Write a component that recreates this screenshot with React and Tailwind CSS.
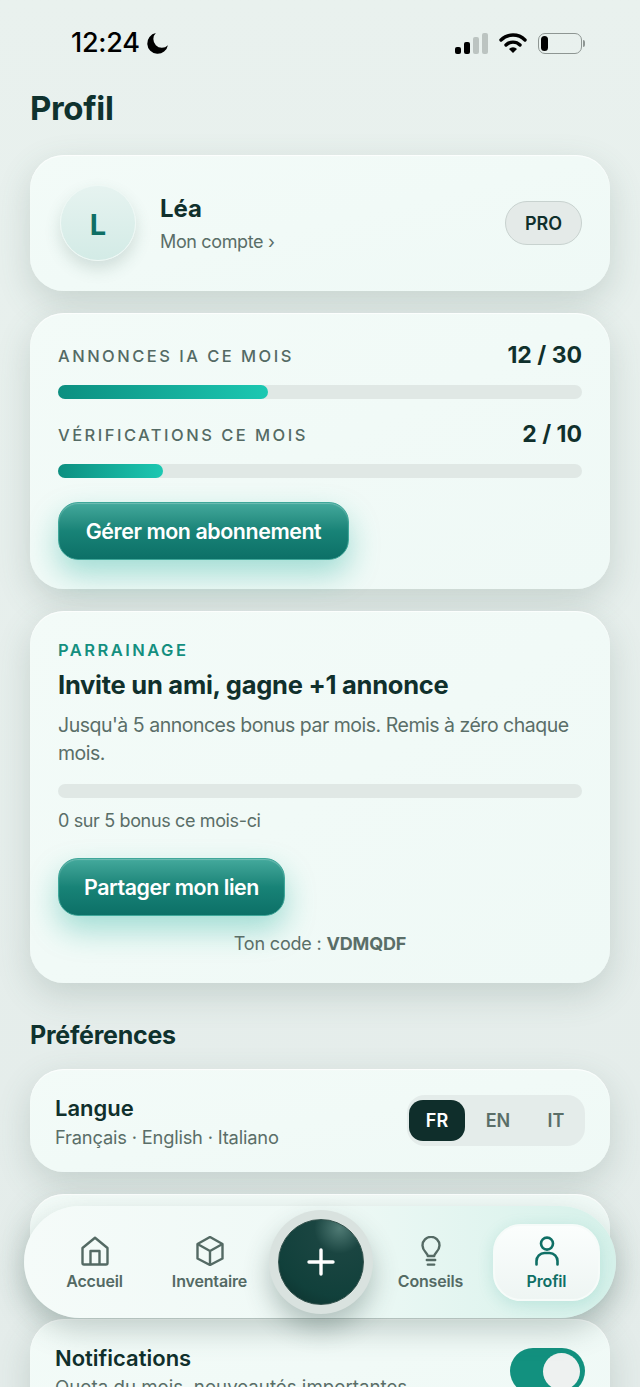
const cardClass =
    'rounded-[34px] bg-gradient-to-br from-[#f3fbf8] to-[#eff9f6] shadow-[0_12px_34px_rgba(70,100,92,0.2),inset_0_1px_1px_rgba(255,255,255,0.8)]';

const buttonClass =
    'h-[58px] rounded-[20px] border border-[#3fa79a] bg-gradient-to-b from-[#43a99c] via-[#188377] to-[#0c7067] text-[21.4px] font-semibold tracking-[-0.02em] text-white shadow-[0_14px_30px_rgba(20,170,150,0.36),inset_0_1px_1px_rgba(255,255,255,0.25)]';

function StatusBar() {
    return (
        <div className="flex h-[86px] items-center justify-between pl-[71px] pr-[55px] text-black">
            <div className="flex items-center gap-[5px]">
                <span className="text-[27px] font-medium tracking-[-0.01em]">12:24</span>
                <svg width="25" height="25" viewBox="0 0 24 24" fill="currentColor">
                    <path d="M22 13.6A10 10 0 1 1 10.4 2a8 8 0 0 0 11.6 11.6z" />
                </svg>
            </div>
            <div className="flex items-center gap-[11px]">
                <div className="flex items-end gap-[3px]">
                    <span className="h-[7px] w-[6px] rounded-[2px] bg-black" />
                    <span className="h-[12px] w-[6px] rounded-[2px] bg-black" />
                    <span className="h-[17px] w-[6px] rounded-[2px] bg-[#bcc4c1]" />
                    <span className="h-[21px] w-[6px] rounded-[2px] bg-[#bcc4c1]" />
                </div>
                <svg width="28" height="22" viewBox="0 0 28 22" fill="none" stroke="black" strokeWidth="3.4" strokeLinecap="round">
                    <path d="M2 8a17 17 0 0 1 24 0" />
                    <path d="M7 13a10 10 0 0 1 14 0" />
                    <path d="M14 21l-4-4a5.5 5.5 0 0 1 8 0z" fill="black" stroke="none" />
                </svg>
                <div className="flex items-center gap-[1px]">
                    <div className="flex h-[21px] w-[44px] items-center rounded-[7px] border-[1.5px] border-[#8e9693] px-[2px]">
                        <span className="h-[15px] w-[7px] rounded-[4px] bg-black" />
                    </div>
                    <span className="h-[7px] w-[2px] rounded-r-sm bg-[#8e9693]" />
                </div>
            </div>
        </div>
    );
}

function Usage({ label, value, percent }) {
    return (
        <div>
            <div className="flex h-[28px] items-center justify-between">
                <span className="pt-[3px] text-[16.5px] font-medium tracking-[0.15em] text-[#546a64]">{label}</span>
                <span className="text-[23px] font-bold text-[#10302c]">{value}</span>
            </div>
            <div className="mt-[16px] h-[14px] rounded-full bg-[#e0e8e5]">
                <div
                    className="h-full rounded-full bg-gradient-to-r from-[#0c8f80] to-[#1cc8b2]"
                    style={{ width: `${percent}%` }}
                />
            </div>
        </div>
    );
}

function HomeIcon() {
    return (
        <svg width="30" height="30" viewBox="0 0 30 30" fill="none" stroke="currentColor" strokeWidth="2.4" strokeLinejoin="round">
            <path d="M2.5 12 15 1.8 27.5 12v15a1.5 1.5 0 0 1-1.5 1.5H4A1.5 1.5 0 0 1 2.5 27z" />
            <path d="M10.5 28.5V15h9v13.5" />
        </svg>
    );
}

function BoxIcon() {
    return (
        <svg width="30" height="30" viewBox="0 0 30 30" fill="none" stroke="currentColor" strokeWidth="2.4" strokeLinejoin="round">
            <path d="M15 1 27.5 8v14.5L15 29 2.5 22.5V8z" />
            <path d="M2.5 8 15 15l12.5-7M15 15v14" />
        </svg>
    );
}

function BulbIcon() {
    return (
        <svg width="30" height="30" viewBox="0 0 30 30" fill="none" stroke="currentColor" strokeWidth="2.4" strokeLinecap="round" strokeLinejoin="round">
            <path d="M11.8 20c0-3-5.3-4.8-5.3-10.6a8.5 8.5 0 0 1 17 0C23.500 15.200 18.200 17 18.200 20z" />
            <path d="M10.800 24h8.400M11.800 28.600h6.400" />
        </svg>
    );
}

function PersonIcon() {
    return (
        <svg width="30" height="30" viewBox="0 0 30 30" fill="none" stroke="currentColor" strokeWidth="2.6" strokeLinecap="round">
            <circle cx="15" cy="7.600" r="6" />
            <path d="M4.500 28.500v-3.500a8 8 0 0 1 8-8h5a8 8 0 0 1 8 8v3.500" />
        </svg>
    );
}

function NavItem({ icon: Icon, label, active }) {
    return (
        <div
            className={
                active
                    ? 'flex h-[77px] w-[107px] flex-col items-center justify-center gap-[5px] rounded-[28px] border-2 border-[#f6fbf9] bg-gradient-to-b from-[#fbfefd] to-[#eef5f3] pt-[2px] text-[#0f6f65] shadow-[0_4px_16px_rgba(40,160,145,0.18)]'
                    : 'flex h-[77px] w-[107px] flex-col items-center justify-center gap-[5px] pt-[2px] text-[#546a64]'
            }
        >
            <Icon />
            <span className="text-[16px] font-semibold leading-[20px] tracking-[-0.01em]">{label}</span>
        </div>
    );
}

function BottomNav() {
    return (
        <div className="absolute left-[24px] top-[1206px] grid h-[112px] w-[592px] grid-cols-[115px_113px_108px_116px_107px] items-center rounded-[56px] bg-gradient-to-r from-[#f5fbf9] via-[#eff9f6] to-[#d6f1ea] pl-[17px] shadow-[0_12px_30px_rgba(60,90,82,0.28)]">
            <NavItem icon={HomeIcon} label="Accueil" />
            <NavItem icon={BoxIcon} label="Inventaire" />
            <div className="flex h-[104px] w-[104px] items-center justify-center rounded-full bg-[#d9e2df] shadow-[0_14px_26px_rgba(40,70,64,0.3)]">
                <div className="flex h-[86px] w-[86px] items-center justify-center rounded-full border border-[#34524d] bg-[radial-gradient(circle_at_72%_10%,#4f7a74_0%,#1a4541_26%,#11403b_70%,#0c2f2b_100%)] text-white">
                    <svg width="30" height="30" viewBox="0 0 30 30" stroke="currentColor" strokeWidth="3.4" strokeLinecap="round">
                        <path d="M15 3v24M3 15h24" />
                    </svg>
                </div>
            </div>
            <NavItem icon={BulbIcon} label="Conseils" />
            <NavItem icon={PersonIcon} label="Profil" active />
        </div>
    );
}

export default function App() {
    return (
        <div className="relative h-[1387px] overflow-hidden bg-gradient-to-b from-[#e9f1ee] to-[#e4ecea] font-['Inter',sans-serif] text-[#10302c]">
            <StatusBar />

            <main className="px-[30px]">
                <h1 className="text-[33px] font-bold leading-[44px] tracking-[-0.01em] text-[#0f322e]">Profil</h1>

                <section className={`${cardClass} mt-[25px] flex h-[136px] items-center justify-between pl-[30px] pr-[28px]`}>
                    <div className="flex items-center gap-[24px]">
                        <div className="flex h-[76px] w-[76px] items-center justify-center rounded-full border border-[#eef8f5] bg-gradient-to-b from-[#e6f3f0] to-[#d3ebe6] pt-[3px] text-[29px] font-bold text-[#0f6f65] shadow-[0_8px_16px_rgba(60,100,90,0.18)]">
                            L
                        </div>
                        <div className="pt-[2px]">
                            <div className="text-[24px] font-bold leading-[30px]">Léa</div>
                            <div className="mt-[6px] text-[18px] leading-[24px] tracking-[-0.02em] text-[#5a6e68]">Mon compte ›</div>
                        </div>
                    </div>
                    <div className="flex h-[44px] w-[77px] items-center justify-center rounded-[22px] border border-[#c8d2cf] bg-[#e4eae8] pt-[1px] text-[18px] font-semibold">
                        PRO
                    </div>
                </section>

                <section className={`${cardClass} mt-[22px] flex h-[276px] flex-col gap-[21px] px-[28px] pt-[28px]`}>
                    <Usage label="ANNONCES IA CE MOIS" value="12 / 30" percent={40} />
                    <Usage label="VÉRIFICATIONS CE MOIS" value="2 / 10" percent={20} />
                    <button className={`${buttonClass} mt-[3px] w-[291px]`}>Gérer mon abonnement</button>
                </section>

                <section className={`${cardClass} mt-[22px] h-[372px] px-[28px] pt-[28px]`}>
                    <div className="text-[16.5px] font-semibold leading-[22px] tracking-[0.15em] text-[#148f7f]">PARRAINAGE</div>
                    <h2 className="mt-[6px] text-[25.5px] font-bold leading-[36px] tracking-[-0.01em]">Invite un ami, gagne +1 annonce</h2>
                    <p className="mt-[8px] text-[19.5px] leading-[28px] tracking-[-0.025em] text-[#5a6e68]">
                        Jusqu'à 5 annonces bonus par mois. Remis à zéro chaque mois.
                    </p>
                    <div className="mt-[17px] h-[14px] rounded-full bg-[#e0e8e5]" />
                    <div className="mt-[10px] text-[18px] leading-[26px] tracking-[-0.02em] text-[#5a6e68]">0 sur 5 bonus ce mois-ci</div>
                    <button className={`${buttonClass} mt-[24px] w-[227px]`}>Partager mon lien</button>
                    <div className="mt-[15px] text-center text-[18px] leading-[26px] tracking-[-0.01em] text-[#5a6e68]">
                        Ton code : <span className="font-bold">VDMQDF</span>
                    </div>
                </section>

                <h2 className="mt-[34px] text-[25px] font-bold leading-[36px] tracking-[-0.01em] text-[#0f322e]">Préférences</h2>

                <div className="mt-[16px] flex flex-col gap-[22px]">
                    <section className={`${cardClass} flex h-[103px] items-center justify-between px-[25px]`}>
                        <div className="pt-[3px]">
                            <div className="text-[22px] font-semibold leading-[28px]">Langue</div>
                            <div className="mt-[2px] text-[18.3px] leading-[26px] tracking-[-0.01em] text-[#5a6e68]">Français · English · Italiano</div>
                        </div>
                        <div className="flex h-[51px] w-[178px] items-center rounded-[18px] bg-[#e4ecea] pl-[2px] text-[18px] font-semibold text-[#5a6e68]">
                            <span className="flex h-[41px] w-[56px] items-center justify-center rounded-[14px] bg-[#0f2e2b] text-white">FR</span>
                            <span className="flex w-[66px] justify-center">EN</span>
                            <span className="flex w-[50px] justify-center">IT</span>
                        </div>
                    </section>

                    <section className={`${cardClass} h-[103px]`} />

                    <section className={`${cardClass} flex h-[103px] justify-between px-[25px] pt-[25px]`}>
                        <div>
                            <div className="text-[22px] font-semibold leading-[28px]">Notifications</div>
                            <div className="mt-[3px] whitespace-nowrap text-[18.7px] leading-[26px] text-[#5a6e68]">Quota du mois, nouveautés importantes</div>
                        </div>
                        <div className="mt-[4px] flex h-[46px] w-[75px] items-center justify-end rounded-full bg-[#12917f] pr-[5px]">
                            <span className="h-[37px] w-[37px] rounded-full bg-[#eef1f0]" />
                        </div>
                    </section>
                </div>
            </main>

            <BottomNav />
        </div>
    );
}
